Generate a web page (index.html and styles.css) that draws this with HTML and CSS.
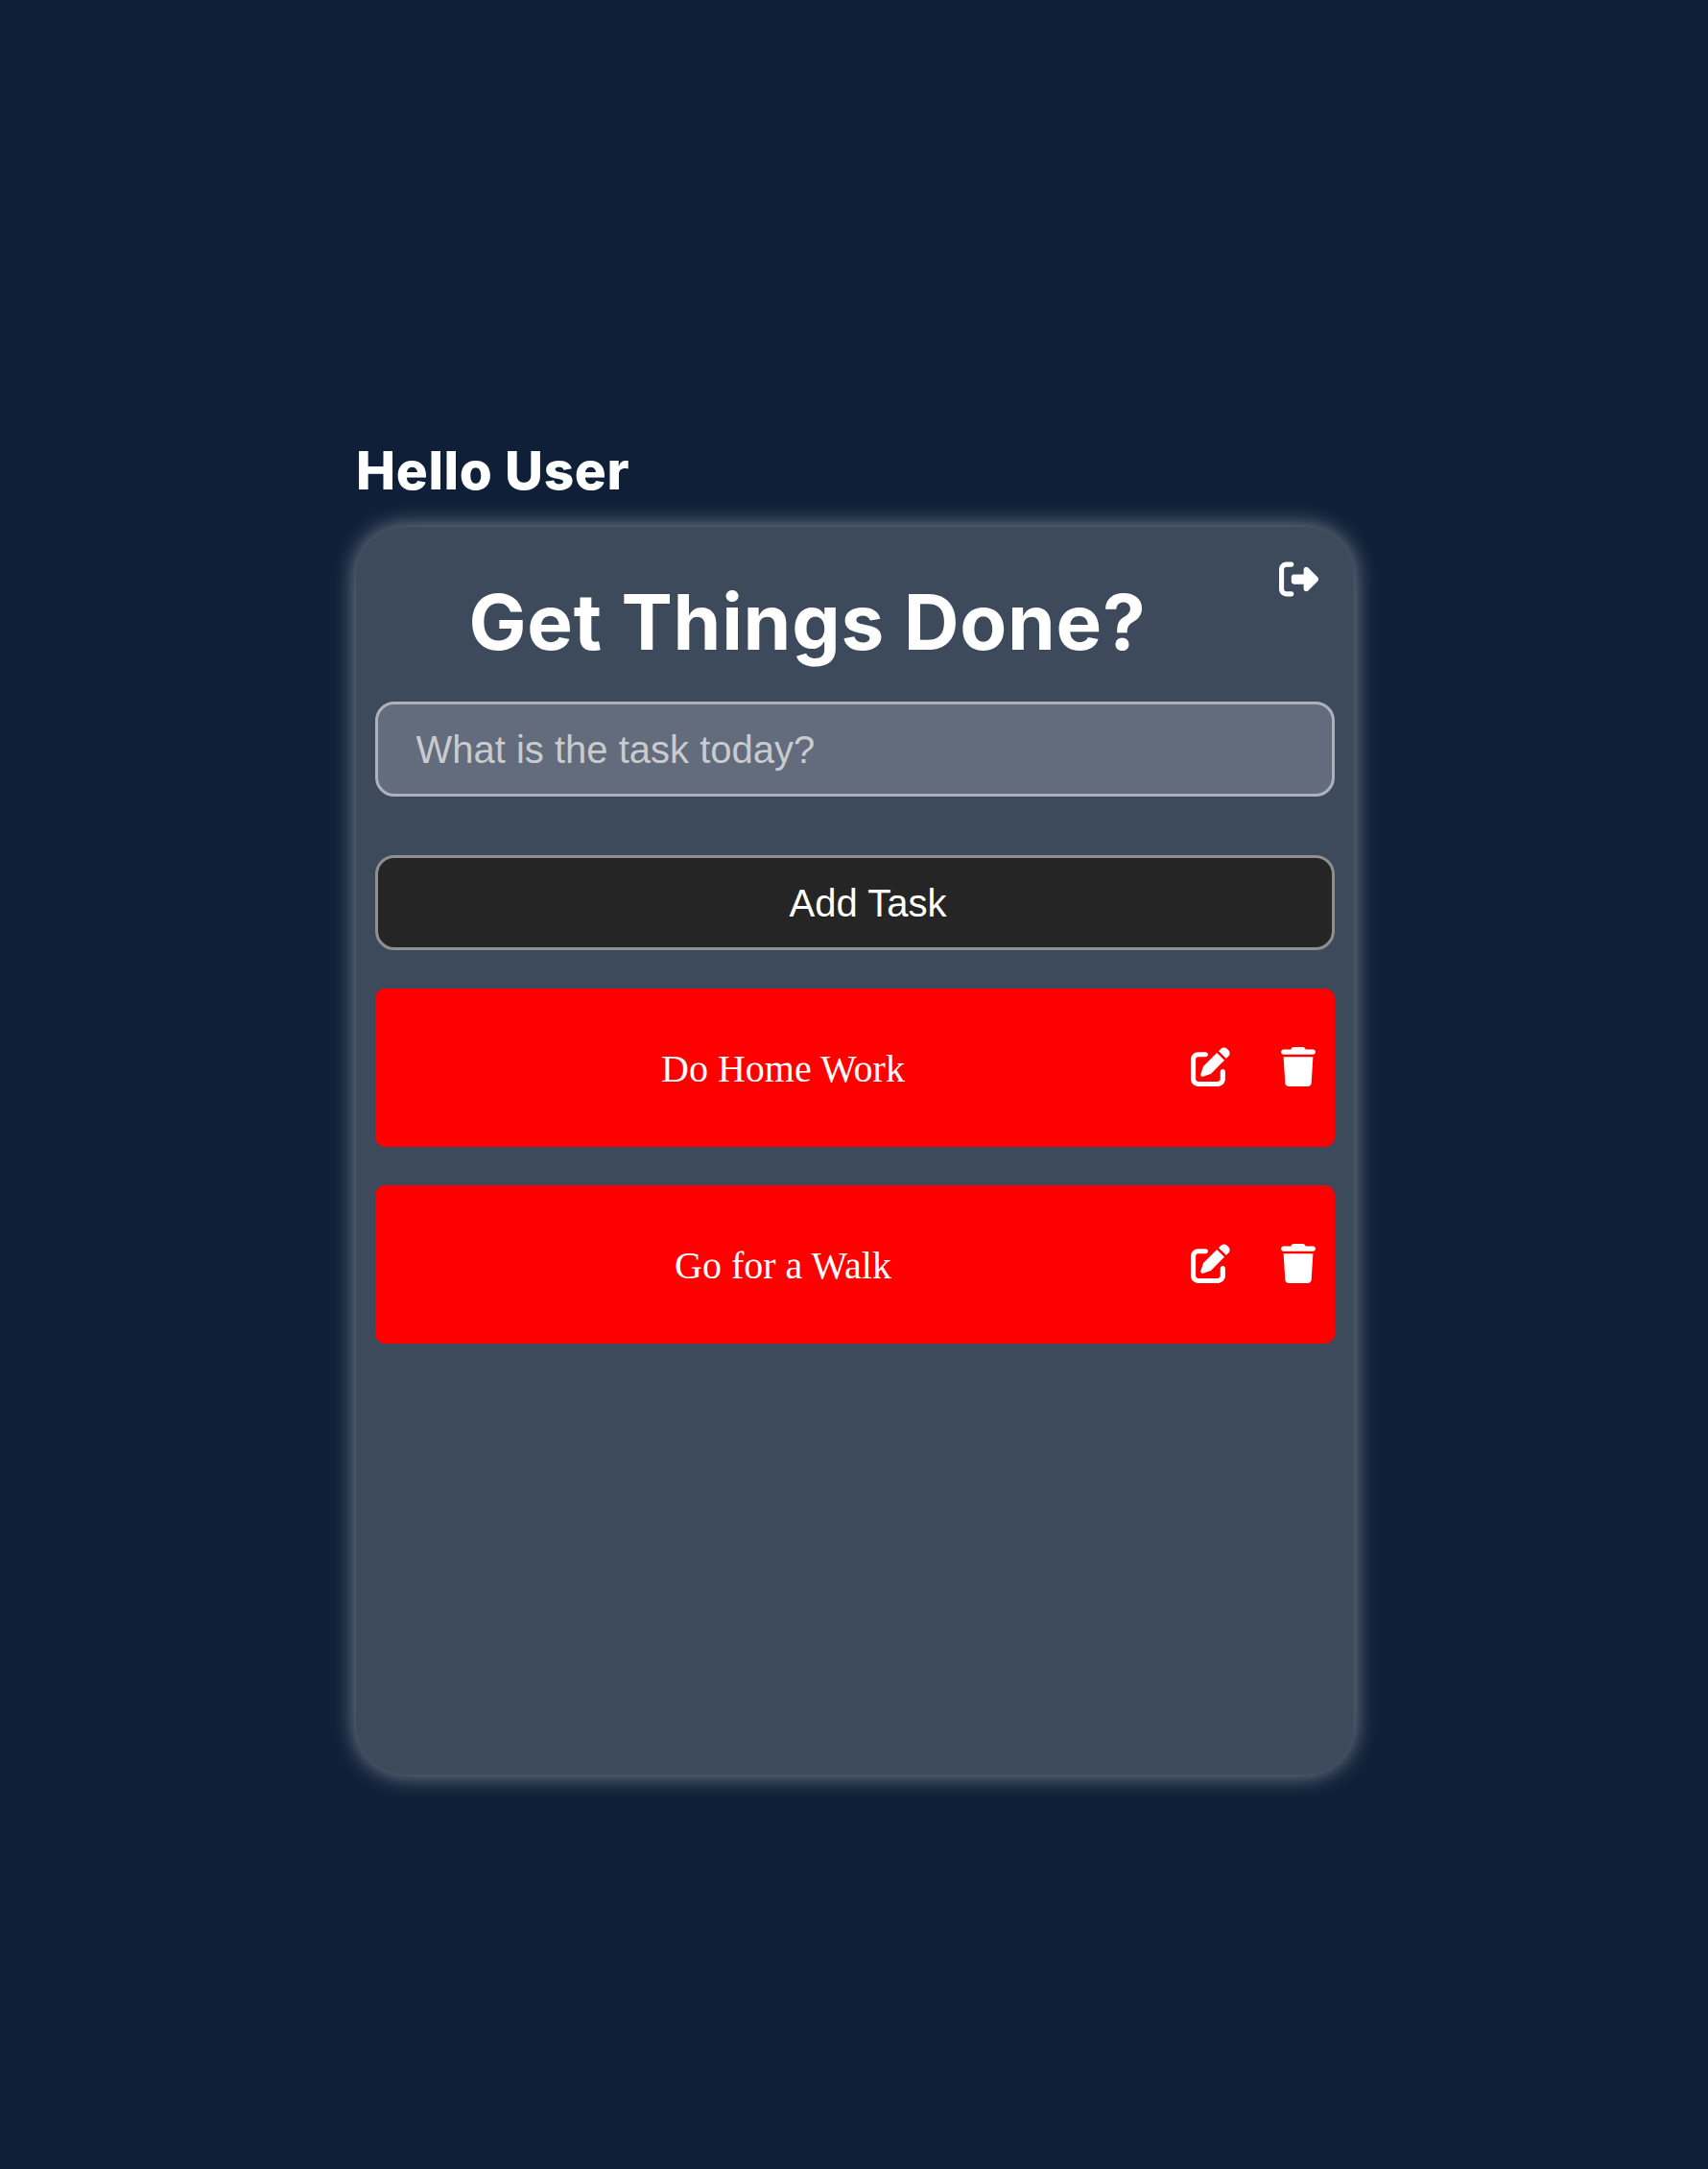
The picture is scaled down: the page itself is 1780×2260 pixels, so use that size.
FILE: index.html
```html
<!DOCTYPE html>
<html lang="en">
<head>
<meta charset="utf-8">
<title>Get Things Done</title>
<link rel="stylesheet" href="styles.css">
</head>
<body>
<svg class="sprite" aria-hidden="true">
  <symbol id="logout" viewBox="0 0 512 512"><path d="M377.9 105.9L500.7 228.7c7.2 7.2 11.3 17.1 11.3 27.3s-4.1 20.1-11.3 27.3L377.9 406.1c-6.4 6.4-15 9.9-24 9.9c-18.7 0-33.9-15.2-33.9-33.9l0-62.1-128 0c-17.7 0-32-14.3-32-32l0-64c0-17.7 14.3-32 32-32l128 0 0-62.1c0-18.7 15.2-33.9 33.9-33.9c9 0 17.6 3.6 24 9.9zM160 96L96 96c-17.7 0-32 14.3-32 32l0 256c0 17.7 14.3 32 32 32l64 0c17.7 0 32 14.3 32 32s-14.3 32-32 32l-64 0c-53 0-96-43-96-96L0 128C0 75 43 32 96 32l64 0c17.7 0 32 14.3 32 32s-14.3 32-32 32z"/></symbol>
  <symbol id="edit" viewBox="0 0 512 512"><path d="M471.6 21.7c-21.9-21.9-57.3-21.9-79.2 0L362.3 51.7l97.9 97.9 30.1-30.1c21.9-21.9 21.9-57.3 0-79.2L471.6 21.7zm-299.2 220c-6.1 6.1-10.8 13.6-13.5 21.9l-29.6 88.8c-2.9 8.6-.6 18.1 5.8 24.6s15.9 8.7 24.6 5.8l88.8-29.6c8.2-2.7 15.7-7.4 21.9-13.5L437.7 172.3 339.7 74.3 172.4 241.7zM96 64C43 64 0 107 0 160V416c0 53 43 96 96 96H352c53 0 96-43 96-96V320c0-17.7-14.3-32-32-32s-32 14.3-32 32v96c0 17.7-14.3 32-32 32H96c-17.7 0-32-14.3-32-32V160c0-17.7 14.3-32 32-32h96c17.7 0 32-14.3 32-32s-14.3-32-32-32H96z"/></symbol>
  <symbol id="trash" viewBox="0 0 448 512"><path d="M135.2 17.7L128 32H32C14.3 32 0 46.3 0 64S14.3 96 32 96H416c17.7 0 32-14.3 32-32s-14.3-32-32-32H320l-7.2-14.3C307.4 6.8 296.3 0 284.2 0H163.8c-12.1 0-23.2 6.8-28.6 17.7zM416 128H32L53.2 467c1.6 25.3 22.6 45 47.9 45H346.9c25.3 0 46.3-19.7 47.9-45L416 128z"/></symbol>
</svg>
<main class="page">
  <h2 class="greeting">Hello User</h2>
  <section class="card">
    <header class="card-head">
      <h1 class="title">Get Things Done?</h1>
      <svg class="icon icon-logout"><use href="#logout"/></svg>
    </header>
    <form class="task-form">
      <input class="field" type="text" placeholder="What is the task today?">
      <button class="add" type="button">Add Task</button>
    </form>
    <ul class="tasks">
      <li class="task">
        <span class="task-name">Do Home Work</span>
        <svg class="icon"><use href="#edit"/></svg>
        <svg class="icon icon-trash"><use href="#trash"/></svg>
      </li>
      <li class="task">
        <span class="task-name">Go for a Walk</span>
        <svg class="icon"><use href="#edit"/></svg>
        <svg class="icon icon-trash"><use href="#trash"/></svg>
      </li>
    </ul>
  </section>
</main>
</body>
</html>
```
FILE: styles.css
```css
* {
  box-sizing: border-box;
}

body {
  margin: 0;
  min-height: 2260px;
  background: #0f1f37;
  color: #fff;
}

.sprite {
  display: none;
}

.page {
  width: 1040px;
  margin-left: 371px;
  padding-top: 450px;
}

.greeting {
  margin: 0;
  height: 98.5px;
  line-height: 80px;
  font-family: Inter, sans-serif;
  font-size: 55px;
  font-weight: 800;
  letter-spacing: 0.6px;
  white-space: nowrap;
}

.card {
  height: 1300px;
  padding: 0 20.5px 0 19.5px;
  border-radius: 51px;
  background: #3d4a5c;
  box-shadow: 0 0 24px rgba(255, 255, 255, 0.5);
}

.card-head {
  display: flex;
  justify-content: space-between;
  height: 182.5px;
}

.title {
  margin: 0;
  padding: 39px 0 0 98px;
  line-height: 120px;
  font-family: Inter, sans-serif;
  font-size: 80px;
  font-weight: 700;
  letter-spacing: 0.75px;
  white-space: nowrap;
}

.icon {
  flex: none;
  width: 41px;
  height: 41px;
  fill: #fff;
}

.icon-logout {
  margin: 34px 17px 0 0;
}

.icon-trash {
  width: 36px;
  margin-left: 53px;
}

.task-form {
  display: flex;
  flex-direction: column;
  gap: 61px;
}

.field,
.add {
  width: 100%;
  height: 99px;
  border-radius: 20px;
  font-family: "Liberation Sans", Arial, sans-serif;
  font-size: 40px;
}

.field {
  padding: 2px 40px 0;
  border: 3px solid #adb1bc;
  background: #636c7c;
  color: #fff;
}

.field::placeholder {
  color: #c9cbce;
  opacity: 1;
}

.add {
  padding: 2px 0 0 28px;
  border: 3px solid #8f8f8f;
  background: #252525;
  color: #fff;
}

.tasks {
  display: flex;
  flex-direction: column;
  gap: 40px;
  margin: 40px 0 0;
  padding: 0;
  list-style: none;
}

.task {
  display: flex;
  align-items: center;
  height: 165px;
  padding: 0 20px 3px 0;
  border-radius: 10px;
  background: #f00;
}

.task-name {
  flex: 1;
  padding: 4px 0 0 1px;
  text-align: center;
  font-family: "Liberation Serif", "Times New Roman", serif;
  font-size: 40px;
}
```
